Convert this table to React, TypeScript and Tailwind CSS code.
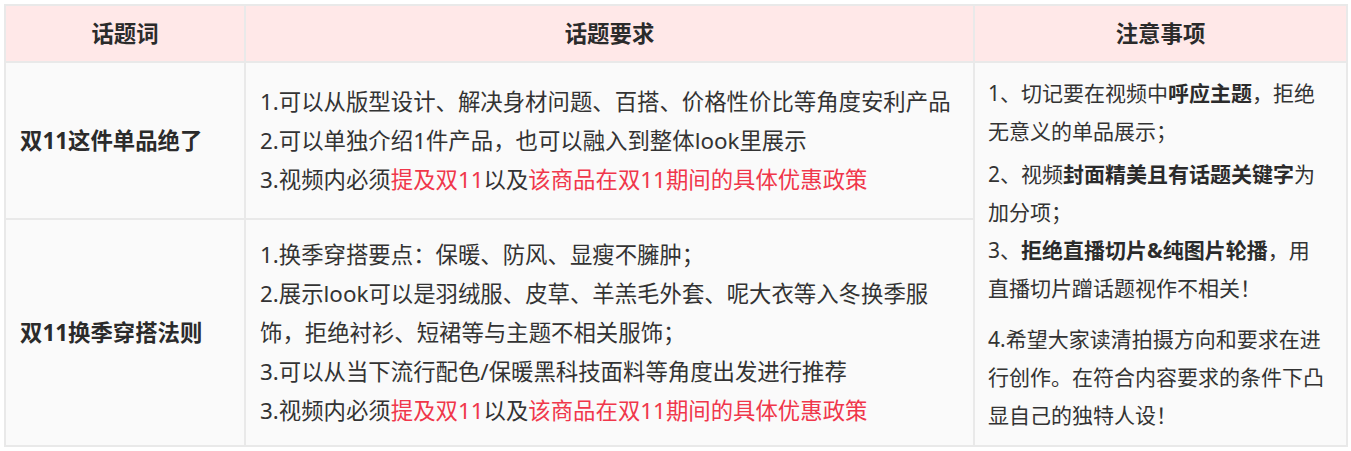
const Red = ({ children }: { children: React.ReactNode }) => (
  <span className="text-[#f0374b]">{children}</span>
);

const Mention = () => (
  <div>
    3.视频内必须<Red>提及双11</Red>以及<Red>该商品在双11期间的具体优惠政策</Red>
  </div>
);

export default function App() {
  return (
    <div className="bg-white p-1 font-['Noto_Sans','Noto_Sans_CJK_SC',sans-serif] text-[#333]">
      <div className="grid w-[1344px] grid-cols-[238px_727px_371px] grid-rows-[55px_155px_225px] gap-[2px] border-2 border-[#e9e9e9] bg-[#e9e9e9]">
        {/* 表头 */}
        <div className="flex items-center justify-center bg-[#ffe8e8] text-[22.4px] font-bold text-[#2b2b2b]">话题词</div>
        <div className="flex items-center justify-center bg-[#ffe8e8] text-[22.4px] font-bold text-[#2b2b2b]">话题要求</div>
        <div className="flex items-center justify-center bg-[#ffe8e8] text-[22.4px] font-bold text-[#2b2b2b]">注意事项</div>

        {/* 第一行 */}
        <div className="flex items-center bg-[#fafafa] pl-[14px] text-[22.4px] font-bold text-[#2b2b2b]">双11这件单品绝了</div>
        <div className="flex flex-col justify-center whitespace-nowrap bg-[#fafafa] pl-[14px] text-[22.4px] leading-[39px]">
          <div>1.可以从版型设计、解决身材问题、百搭、价格性价比等角度安利产品</div>
          <div>2.可以单独介绍1件产品，也可以融入到整体look里展示</div>
          <Mention />
        </div>

        {/* 注意事项（跨两行） */}
        <div className="row-span-2 flex flex-col justify-center whitespace-nowrap bg-[#fafafa] pl-[13px] text-[21px] leading-[38px]">
          <p>
            1、切记要在视频中<b className="text-[#2b2b2b]">呼应主题</b>，拒绝
            <br />
            无意义的单品展示；
          </p>
          <p className="mt-[5px]">
            2、视频<b className="text-[#2b2b2b]">封面精美且有话题关键字</b>为
            <br />
            加分项；
          </p>
          <p>
            3、<b className="text-[#2b2b2b]">拒绝直播切片&amp;纯图片轮播</b>，用
            <br />
            直播切片蹭话题视作不相关！
          </p>
          <p className="mt-[13px]">
            4.希望大家读清拍摄方向和要求在进
            <br />
            行创作。在符合内容要求的条件下凸
            <br />
            显自己的独特人设！
          </p>
        </div>

        {/* 第二行 */}
        <div className="flex items-center bg-[#fafafa] pl-[14px] text-[22.4px] font-bold text-[#2b2b2b]">双11换季穿搭法则</div>
        <div className="flex flex-col justify-center whitespace-nowrap bg-[#fafafa] pl-[14px] text-[22.4px] leading-[39px]">
          <div>1.换季穿搭要点：保暖、防风、显瘦不臃肿；</div>
          <div>
            2.展示look可以是羽绒服、皮草、羊羔毛外套、呢大衣等入冬换季服
            <br />
            饰，拒绝衬衫、短裙等与主题不相关服饰；
          </div>
          <div>3.可以从当下流行配色/保暖黑科技面料等角度出发进行推荐</div>
          <Mention />
        </div>
      </div>
    </div>
  );
}
